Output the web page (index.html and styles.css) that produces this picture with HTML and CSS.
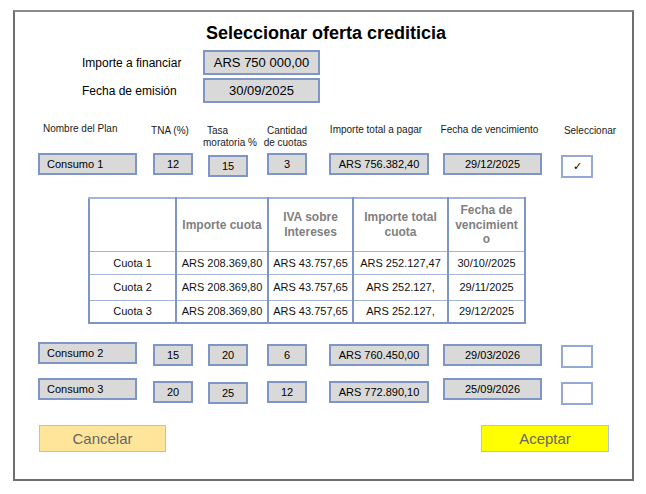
FILE: index.html
```html
<!DOCTYPE html>
<html lang="es">
<head>
  <meta charset="UTF-8">
  <meta name="viewport" content="width=device-width, initial-scale=1.0">
  <title>Seleccionar oferta crediticia</title>
  <link rel="stylesheet" href="styles.css">
</head>
<body>

  <div class="frame">
    <h1 class="title">Seleccionar oferta crediticia</h1>

    <div class="summary">
      <span class="summary-label">Importe a financiar</span>
      <span class="box box-summary">ARS 750 000,00</span>
      <span class="summary-label">Fecha de emisión</span>
      <span class="box box-summary">30/09/2025</span>
    </div>

    <div class="plan-row plan-head">
      <div class="hd hd-name"><span>Nombre del Plan</span></div>
      <div class="hd hd-tna"><span>TNA (%)</span></div>
      <div class="hd hd-rate"><span>Tasa<br>moratoria %</span></div>
      <div class="hd hd-count"><span>Cantidad<br>de cuotas</span></div>
      <div class="hd hd-total"><span>Importe total a pagar</span></div>
      <div class="hd hd-date"><span>Fecha de vencimiento</span></div>
      <div class="hd hd-check"><span>Seleccionar</span></div>
    </div>

    <div class="plan-row plan-first">
      <div class="box box-name">Consumo 1</div>
      <div class="box box-num">12</div>
      <div class="box box-num low">15</div>
      <div class="box box-num">3</div>
      <div class="box box-total">ARS 756.382,40</div>
      <div class="box box-date">29/12/2025</div>
      <div class="check low">✓</div>
    </div>

    <table class="quotas">
      <thead>
        <tr>
          <th class="c-label"></th>
          <th class="c-amount">Importe cuota</th>
          <th class="c-iva">IVA sobre Intereses</th>
          <th class="c-sum">Importe total cuota</th>
          <th class="c-due">Fecha de vencimiento</th>
        </tr>
      </thead>
      <tbody>
        <tr>
          <td>Cuota 1</td>
          <td>ARS 208.369,80</td>
          <td>ARS 43.757,65</td>
          <td>ARS 252.127,47</td>
          <td>30/10//2025</td>
        </tr>
        <tr class="row-tall">
          <td>Cuota 2</td>
          <td>ARS 208.369,80</td>
          <td>ARS 43.757,65</td>
          <td>ARS 252.127,</td>
          <td>29/11/2025</td>
        </tr>
        <tr>
          <td>Cuota 3</td>
          <td>ARS 208.369,80</td>
          <td>ARS 43.757,65</td>
          <td>ARS 252.127,</td>
          <td>29/12/2025</td>
        </tr>
      </tbody>
    </table>

    <div class="plan-row plan-second">
      <div class="box box-name">Consumo 2</div>
      <div class="box box-num low">15</div>
      <div class="box box-num low">20</div>
      <div class="box box-num low">6</div>
      <div class="box box-total low">ARS 760.450,00</div>
      <div class="box box-date low">29/03/2026</div>
      <div class="check lower"></div>
    </div>

    <div class="plan-row plan-third">
      <div class="box box-name">Consumo 3</div>
      <div class="box box-num lower">20</div>
      <div class="box box-num lowest">25</div>
      <div class="box box-num lower">12</div>
      <div class="box box-total lower">ARS 772.890,10</div>
      <div class="box box-date">25/09/2026</div>
      <div class="check lowest"></div>
    </div>

    <div class="actions">
      <button type="button" class="btn btn-cancel">Cancelar</button>
      <button type="button" class="btn btn-accept">Aceptar</button>
    </div>
  </div>

</body>
</html>
```

FILE: styles.css
```css
body {
  margin: 0;
  padding: 0;
  background-color: #fff;
  font-family: "Liberation Sans", Arial, sans-serif;
  color: #111;
}

.frame {
  box-sizing: border-box;
  width: 621px;
  height: 471px;
  margin: 10px 0 0 13px;
  border: 2px solid #6f6f6f;
  border-top-color: #8a8a8a;
}

.title {
  margin: 10px 0 0;
  padding-left: 5px;
  font-size: 18px;
  line-height: 22px;
  font-weight: bold;
  text-align: center;
  color: #000;
}

/* importe + fecha */
.summary {
  display: grid;
  grid-template-columns: 121px 117px;
  row-gap: 3px;
  align-items: center;
  margin: 6px 0 0 67px;
}

.summary-label {
  font-size: 12px;
  color: #000;
}

.box {
  box-sizing: border-box;
  height: 22px;
  background-color: #d9d9d9;
  border: 2px solid #7d96c6;
  font-size: 11px;
  line-height: 18px;
  text-align: center;
  white-space: nowrap;
  color: #000;
}

.box-summary {
  height: 25px;
  font-size: 13px;
  line-height: 21px;
}

/* filas de planes */
.plan-row {
  display: grid;
  grid-template-columns: 115px 55px 59px 62px 114px 118px 48px;
  align-items: start;
  margin-left: 23px;
}

.plan-head {
  margin-top: 22px;
}

.plan-first {
  margin-top: 4px;
}

.plan-second {
  margin-top: 18px;
}

.plan-third {
  margin-top: 10px;
}

.hd {
  display: flex;
  justify-content: center;
  font-size: 10px;
  line-height: 12px;
  white-space: nowrap;
  color: #1a1a1a;
}

.hd span {
  display: block;
}

.hd-name {
  justify-content: flex-start;
  padding-left: 5px;
  margin-top: -2px;
}

.hd-tna {
  width: 40px;
  margin-left: -3px;
}

.hd-rate {
  width: 40px;
  justify-content: flex-start;
  margin-left: -5px;
}

.hd-rate span {
  text-indent: 4px;
}

.hd-count {
  width: 40px;
  justify-content: flex-end;
  text-align: right;
}

.hd-total {
  width: 100px;
  margin-left: -3px;
  margin-top: -1px;
}

.hd-date {
  width: 99px;
  margin-left: -3px;
  margin-top: -1px;
}

.hd-check {
  width: 32px;
  margin-left: 13px;
}

.box-name {
  width: 99px;
  padding-left: 7px;
  text-align: left;
}

.box-num {
  width: 40px;
}

.box-total {
  width: 100px;
}

.box-date {
  width: 99px;
}

.check {
  box-sizing: border-box;
  width: 32px;
  height: 23px;
  background-color: #fff;
  border: 2px solid #93a8d2;
  font-size: 11px;
  line-height: 19px;
  text-align: center;
  color: #000;
}

.low {
  margin-top: 2px;
}

.lower {
  margin-top: 3px;
}

.lowest {
  margin-top: 4px;
}

/* tabla de cuotas */
.quotas {
  width: 436px;
  margin: 19px 0 0 73px;
  border-collapse: collapse;
  table-layout: fixed;
}

.quotas th,
.quotas td {
  box-sizing: border-box;
  padding: 0 4px;
  border-left: 2px solid #7d96c6;
  border-right: 2px solid #7d96c6;
  border-top: 1px solid #a3b6da;
  border-bottom: 1px solid #a3b6da;
  text-align: center;
}

.quotas th {
  height: 53px;
  font-size: 12px;
  line-height: 14.5px;
  font-weight: bold;
  color: #7f7f7f;
  overflow-wrap: anywhere;
}

.quotas thead th {
  border-top: 2px solid #a3b6da;
}

.quotas td {
  height: 23px;
  font-size: 11px;
  white-space: nowrap;
}

.quotas .row-tall td {
  height: 26px;
}

.quotas tbody tr:last-child td {
  height: 23px;
  border-bottom: 2px solid #7d96c6;
}

.c-label { width: 87px; }
.c-amount { width: 92px; }
.c-iva { width: 85px; }
.c-sum { width: 95px; }
.c-due { width: 77px; }

/* botones */
.actions {
  display: flex;
  justify-content: space-between;
  margin: 20px 23px 0 24px;
}

.btn {
  box-sizing: border-box;
  width: 128px;
  height: 27px;
  padding: 0;
  border: 1px solid #a9c4eb;
  font-family: "Liberation Sans", Arial, sans-serif;
  font-size: 15px;
  color: #666;
}

.btn-cancel {
  width: 127px;
  background-color: #ffe599;
}

.btn-accept {
  background-color: #ffff00;
}
```
